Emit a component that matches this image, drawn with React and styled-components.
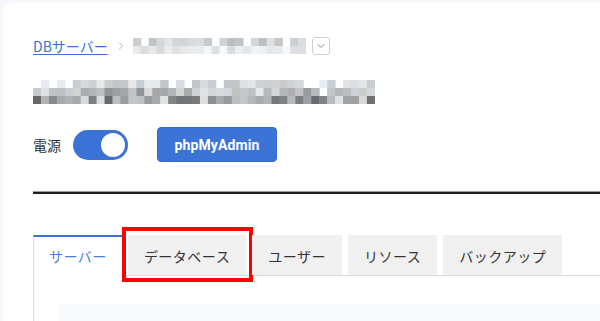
import React from "react";
import styled, { createGlobalStyle } from "styled-components";
import { ChevronRight, ChevronDown } from "lucide-react";

const Global = createGlobalStyle`
  html, body { margin: 0; padding: 0; }
  body {
    background: #f6f8fc;
    overflow: hidden;
    font-family: "Noto Sans CJK JP", "Noto Sans", sans-serif;
    color: #333;
  }
`;

const Card = styled.div`
  margin: 3px 0 0 3px;
  height: calc(100vh - 3px);
  background: #fff;
  border-radius: 10px 0 0 0;
  padding: 34px 0 0 30px;
  box-sizing: border-box;
  overflow: hidden;
`;

const Breadcrumb = styled.div`
  display: flex;
  align-items: center;
  height: 18px;
  font-size: 14px;
`;

const Crumb = styled.a`
  color: #3a70d8;
  text-decoration: underline;
  text-underline-offset: 2px;
  line-height: 18px;
  cursor: pointer;
`;

const Sep = styled.span`
  display: flex;
  color: #b8b8b8;
  margin: 0 6px 0 7px;
`;

const DropButton = styled.button`
  width: 18px;
  height: 18px;
  margin-left: 6px;
  padding: 0;
  border: 1px solid #cfcfcf;
  border-radius: 3px;
  background: #fff;
  display: flex;
  align-items: center;
  justify-content: center;
  color: #888;
`;

const Heading = styled.div`
  margin-top: 25px;
  height: 24px;
  display: flex;
`;

const PowerRow = styled.div`
  margin-top: 23px;
  display: flex;
  align-items: center;
  height: 35px;
`;

const Label = styled.span`
  font-size: 14px;
  color: #333;
`;

const Toggle = styled.div`
  margin-left: 12px;
  width: 55px;
  height: 30px;
  border-radius: 15px;
  background: ${(p) => (p.$on ? "#3b72d5" : "#ccc")};
  display: flex;
  align-items: center;
  justify-content: ${(p) => (p.$on ? "flex-end" : "flex-start")};
  padding: 0 3px;
  box-sizing: border-box;
`;

const Knob = styled.span`
  width: 24px;
  height: 24px;
  border-radius: 50%;
  background: #fff;
`;

const PrimaryButton = styled.button`
  margin-left: 29px;
  width: 120px;
  height: 35px;
  background: #3b73d6;
  border: 1px solid #326ad0;
  border-radius: 4px;
  color: #fff;
  font-family: Roboto, "Noto Sans", sans-serif;
  font-weight: 700;
  font-size: 14px;
  letter-spacing: 0.1px;
`;

const Divider = styled.div`
  margin-top: 30px;
  height: 2px;
  background: #1e1e22;
  box-shadow: 0 -1px 0 #9a9aa0;
`;

const TabBar = styled.div`
  margin-top: 41px;
  display: flex;
  align-items: flex-end;
  gap: 6px;
  border-bottom: 1px solid #dcdcdc;
`;

const Tab = styled.div`
  position: relative;
  display: flex;
  align-items: center;
  font-size: 14px;
  letter-spacing: 0.5px;
  white-space: nowrap;
  box-sizing: border-box;
  color: ${(p) => (p.$active ? "#4a7ddf" : "#333")};
  background: ${(p) => (p.$active ? "#fff" : "#f0f0f0")};
  border-top: 2px solid ${(p) => (p.$active ? "#3a70d8" : "#f0f0f0")};
  border-left: ${(p) => (p.$active ? "1px solid #dcdcdc" : "none")};
  padding: ${(p) => (p.$active ? "0 15px 1px" : "0 16px")};
  margin-bottom: ${(p) => (p.$active ? "-1px" : "0")};
  height: ${(p) => (p.$active ? "41px" : "40px")};
`;

const Highlight = styled.span`
  position: absolute;
  left: -6px;
  right: -7px;
  top: -10px;
  bottom: -7px;
  border: 4px solid #f00;
  pointer-events: none;
`;

const Panel = styled.div`
  border-left: 1px solid #dcdcdc;
  padding: 28px 0 0 25px;
  height: 100%;
`;

const PanelBox = styled.div`
  background: #f7f9fd;
  height: 100%;
`;

function rnd(i) {
  const x = Math.sin(i * 12.9898 + 78.233) * 43758.5453;
  return x - Math.floor(x);
}

function grey(v, tint) {
  const r = Math.round(v);
  const b = Math.min(255, Math.round(v + tint));
  return `rgb(${r},${Math.round(v + tint / 2)},${b})`;
}

function Mosaic({ cols, rows, cell, ranges, seed, skip = [] }) {
  const rects = [];
  for (let r = 0; r < rows; r++) {
    for (let c = 0; c < cols; c++) {
      if (skip.includes(`${r}-${c}`)) continue;
      const [lo, hi, blank] = ranges[r];
      const n = rnd(seed + r * 101 + c * 7);
      if (n < blank) continue;
      const v = lo + rnd(seed + r * 31 + c * 13) * (hi - lo);
      const tint = rnd(seed + c * 3 + r) * 10;
      rects.push(
        <rect key={`${r}-${c}`} x={c * cell} y={r * 8} width={cell + 0.5} height={8} fill={grey(v, tint)} />
      );
    }
  }
  return (
    <svg width={cols * cell} height={rows * 8} style={{ display: "block" }}>
      {rects}
    </svg>
  );
}

const tabs = ["サーバー", "データベース", "ユーザー", "リソース", "バックアップ"];

export default function App() {
  return (
    <>
      <Global />
      <Card>
        <Breadcrumb>
          <Crumb>DBサーバー</Crumb>
          <Sep>
            <ChevronRight size={12} strokeWidth={2} />
          </Sep>
          <Mosaic
            cols={22}
            rows={2}
            cell={7.86}
            seed={3}
            ranges={[
              [185, 230, 0.05],
              [215, 246, 0.0],
            ]}
          />
          <DropButton aria-label="more">
            <ChevronDown size={12} strokeWidth={2} />
          </DropButton>
        </Breadcrumb>
        <Heading>
          <Mosaic
            cols={43}
            rows={3}
            cell={7.95}
            seed={11}
            skip={["0-0"]}
            ranges={[
              [190, 235, 0.35],
              [140, 232, 0.05],
              [100, 225, 0.05],
            ]}
          />
        </Heading>
        <PowerRow>
          <Label>電源</Label>
          <Toggle $on>
            <Knob />
          </Toggle>
          <PrimaryButton>phpMyAdmin</PrimaryButton>
        </PowerRow>
        <Divider />
        <TabBar>
          {tabs.map((t, i) => (
            <Tab key={t} $active={i === 0}>
              {t}
              {i === 1 && <Highlight />}
            </Tab>
          ))}
        </TabBar>
        <Panel>
          <PanelBox />
        </Panel>
      </Card>
    </>
  );
}
